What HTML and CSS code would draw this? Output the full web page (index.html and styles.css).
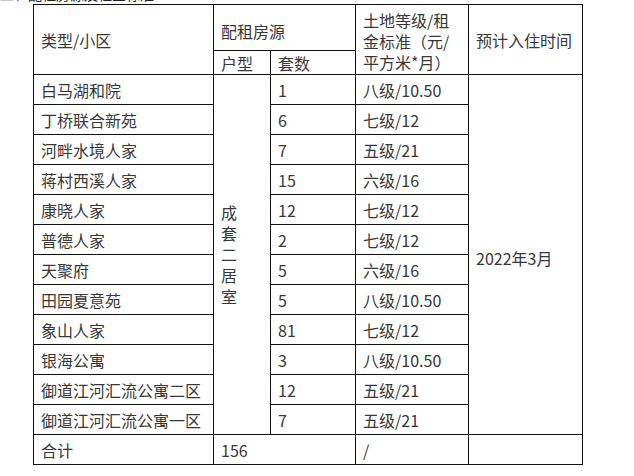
FILE: index.html
```html
<!DOCTYPE html>
<html lang="zh">
<head>
<meta charset="utf-8">
<title>配租房源</title>
<link rel="stylesheet" href="styles.css">
</head>
<body>
<div class="clip"><p class="clip-text">二、配租房源及租金标准</p></div>
<table class="grid">
  <colgroup>
    <col class="c1"><col class="c2"><col class="c3"><col class="c4"><col class="c5">
  </colgroup>
  <tr class="h1">
    <td rowspan="2">类型/小区</td>
    <td colspan="2"><span class="nudge">配租房源</span></td>
    <td rowspan="2"><span class="nudge-sm">土地等级/租<br>金标准（元/<br>平方米*月）</span></td>
    <td rowspan="2">预计入住时间</td>
  </tr>
  <tr class="h2">
    <td>户型</td>
    <td>套数</td>
  </tr>
  <tr><td>白马湖和院</td><td rowspan="12"><span class="stack">成套二居室</span></td><td>1</td><td>八级/10.50</td><td rowspan="12"><span class="nudge">2022年3月</span></td></tr>
  <tr><td>丁桥联合新苑</td><td>6</td><td>七级/12</td></tr>
  <tr><td>河畔水境人家</td><td>7</td><td>五级/21</td></tr>
  <tr><td>蒋村西溪人家</td><td>15</td><td>六级/16</td></tr>
  <tr><td>康晓人家</td><td>12</td><td>七级/12</td></tr>
  <tr><td>普德人家</td><td>2</td><td>七级/12</td></tr>
  <tr><td>天聚府</td><td>5</td><td>六级/16</td></tr>
  <tr><td>田园夏意苑</td><td>5</td><td>八级/10.50</td></tr>
  <tr><td>象山人家</td><td>81</td><td>七级/12</td></tr>
  <tr><td>银海公寓</td><td>3</td><td>八级/10.50</td></tr>
  <tr><td>御道江河汇流公寓二区</td><td>12</td><td>五级/21</td></tr>
  <tr><td>御道江河汇流公寓一区</td><td>7</td><td>五级/21</td></tr>
  <tr><td>合计</td><td colspan="2">156</td><td>/</td><td></td></tr>
</table>
</body>
</html>
```
FILE: styles.css
```css
html, body {
  margin: 0;
  padding: 0;
  background: #fff;
}
body {
  font-family: "Noto Sans CJK SC", "Noto Sans", sans-serif;
  color: #383838;
}
.clip {
  height: 4px;
  overflow: hidden;
}
.clip-text {
  margin: -15px 0 0 0;
  font-size: 14px;
  line-height: 18px;
  color: #222;
  white-space: nowrap;
}
.grid {
  margin-left: 33px;
  border-collapse: collapse;
  table-layout: fixed;
  width: 549px;
  font-size: 16px;
  line-height: 20px;
}
.c1 { width: 180px; }
.c2 { width: 57px; }
.c3 { width: 85px; }
.c4 { width: 113px; }
.c5 { width: 114px; }
.grid td {
  border: 1px solid #111;
  padding: 0 0 0 7px;
  height: 29px;
  vertical-align: middle;
  white-space: nowrap;
}
.grid tr.h1 td { height: 45px; }
.grid tr.h2 td { height: 23px; }
.nudge {
  display: inline-block;
  margin-top: 6px;
}
.nudge-sm {
  display: inline-block;
  margin-top: 4px;
  line-height: 21px;
}
.stack {
  display: block;
  width: 16px;
  white-space: normal;
  word-break: break-all;
  line-height: 21px;
}
```
